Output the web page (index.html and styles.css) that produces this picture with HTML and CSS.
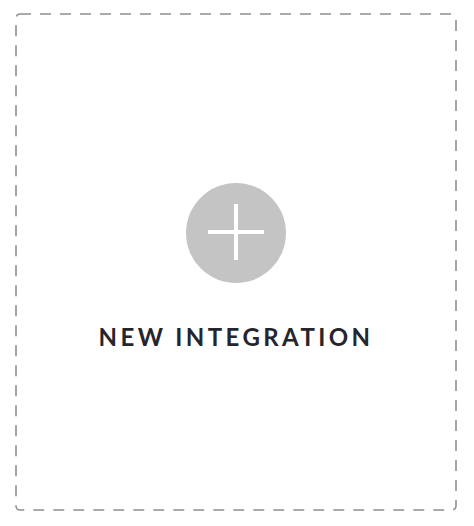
FILE: index.html
```html
<!DOCTYPE html>
<html>
<head>
<meta charset="utf-8">
<link rel="stylesheet" href="styles.css">
</head>
<body>
<div class="card">
  <svg class="frame" width="442" height="498" viewBox="0 0 442 498">
    <rect x="1" y="1" width="440" height="496" rx="4" ry="4" fill="none" stroke="#8f8f8f" stroke-width="1.6" stroke-dasharray="11 9"/>
  </svg>
  <div class="add">
    <svg width="100" height="100" viewBox="0 0 100 100">
      <circle cx="50" cy="50" r="50" fill="#c4c4c4"/>
      <rect x="22" y="47" width="56" height="4" fill="#fff"/>
      <rect x="48" y="21" width="4" height="56" fill="#fff"/>
    </svg>
  </div>
  <div class="label">NEW INTEGRATION</div>
</div>
</body>
</html>
```
FILE: styles.css
```css
html, body {
  margin: 0;
  padding: 0;
  background: #fff;
}
body {
  width: 474px;
  height: 526px;
  overflow: hidden;
}
.card {
  position: relative;
  box-sizing: border-box;
  margin: 13px 0 0 15px;
  width: 442px;
  height: 498px;
  display: flex;
  flex-direction: column;
  align-items: center;
  padding-top: 170px;
}
.frame {
  position: absolute;
  left: 0;
  top: 0;
  display: block;
}
.add {
  width: 100px;
  height: 100px;
}
.add svg {
  display: block;
}
.label {
  margin-top: 40px;
  font-family: "Lato", "Liberation Sans", sans-serif;
  font-weight: 700;
  font-size: 24px;
  line-height: 28px;
  letter-spacing: 3.4px;
  color: #26252d;
}
```
